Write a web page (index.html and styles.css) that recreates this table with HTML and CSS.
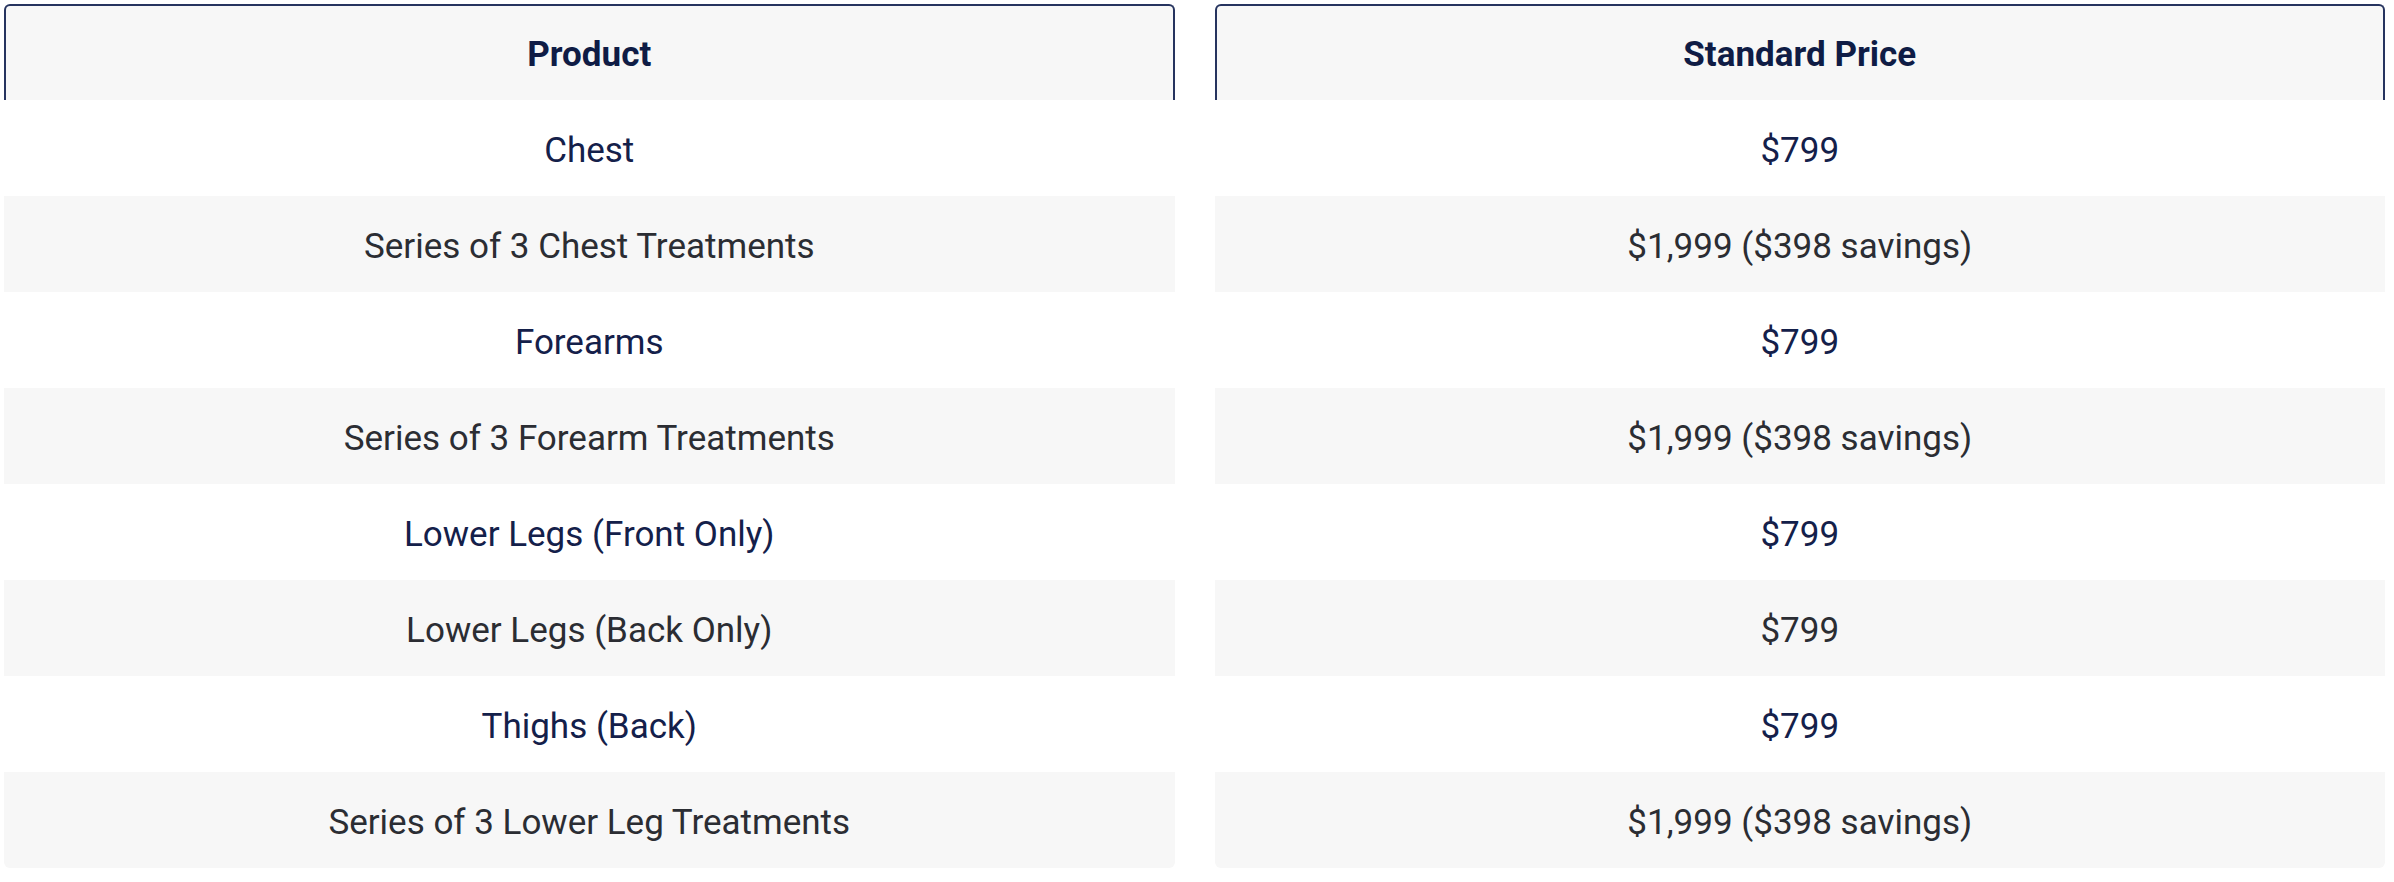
FILE: index.html
```html
<!DOCTYPE html>
<html>
<head>
<meta charset="utf-8">
<link rel="stylesheet" href="styles.css">
</head>
<body>
<div class="tables">
  <div class="col">
    <div class="head">Product</div>
    <div class="row">Chest</div>
    <div class="row alt">Series of 3 Chest Treatments</div>
    <div class="row">Forearms</div>
    <div class="row alt">Series of 3 Forearm Treatments</div>
    <div class="row">Lower Legs (Front Only)</div>
    <div class="row alt">Lower Legs (Back Only)</div>
    <div class="row">Thighs (Back)</div>
    <div class="row alt last">Series of 3 Lower Leg Treatments</div>
  </div>
  <div class="col">
    <div class="head">Standard Price</div>
    <div class="row">$799</div>
    <div class="row alt">$1,999 ($398 savings)</div>
    <div class="row">$799</div>
    <div class="row alt">$1,999 ($398 savings)</div>
    <div class="row">$799</div>
    <div class="row alt">$799</div>
    <div class="row">$799</div>
    <div class="row alt last">$1,999 ($398 savings)</div>
  </div>
</div>
</body>
</html>
```

FILE: styles.css
```css
html, body {
  margin: 0;
  padding: 0;
  background: #ffffff;
}
body {
  font-family: "Roboto", "Liberation Sans", sans-serif;
}
.tables {
  display: flex;
  gap: 40px;
  padding: 4px 9px 0 4px;
}
.col {
  flex: 1;
  display: flex;
  flex-direction: column;
}
.head {
  height: 96px;
  box-sizing: border-box;
  border: 2px solid #26345f;
  border-bottom: none;
  border-radius: 6px 6px 0 0;
  background: #f7f7f7;
  display: flex;
  align-items: center;
  justify-content: center;
  font-weight: 700;
  font-size: 35px;
  color: #0f1c45;
  padding-top: 2px;
}
.row {
  height: 96px;
  box-sizing: border-box;
  padding-top: 5px;
  display: flex;
  align-items: center;
  justify-content: center;
  font-size: 35px;
  color: #14204a;
  background: #ffffff;
}
.row.alt {
  background: #f7f7f7;
  color: #2b2d33;
}
.row.last {
  border-radius: 0 0 6px 6px;
}
```
